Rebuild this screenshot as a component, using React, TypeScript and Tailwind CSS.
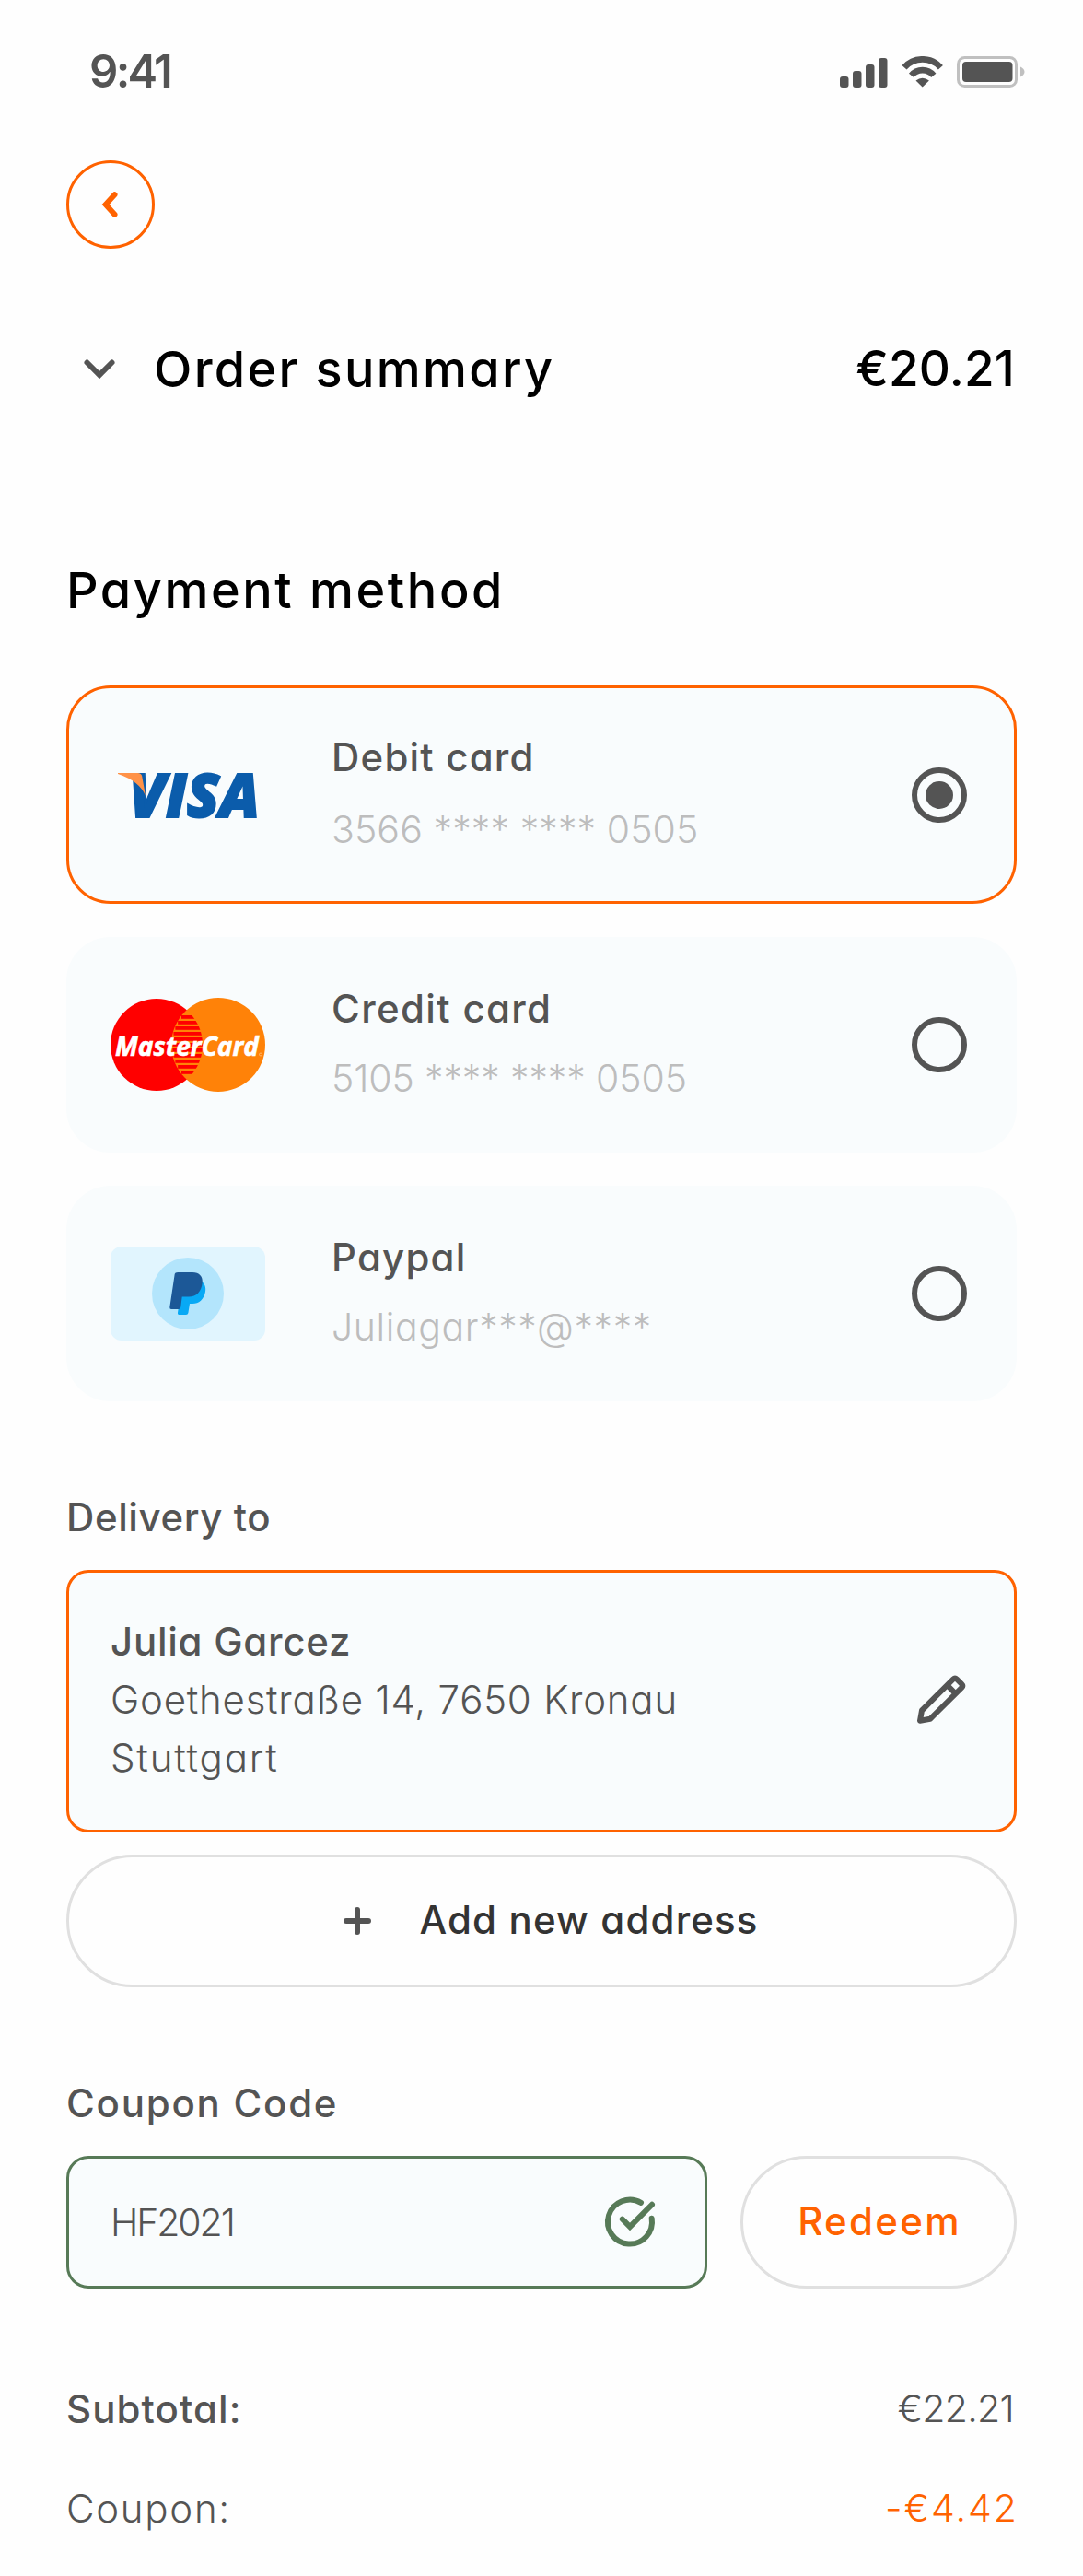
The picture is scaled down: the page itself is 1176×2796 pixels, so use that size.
import { ReactNode, useState } from "react";

interface PaymentMethod {
  id: string;
  name: string;
  detail: string;
  nameClass: string;
  detailClass: string;
  logo: ReactNode;
}

function SignalIcon() {
  return (
    <svg width="52" height="33" viewBox="0 0 52 33" fill="currentColor">
      <rect x="0" y="21" width="9.5" height="12" rx="3" />
      <rect x="14" y="15" width="9.5" height="18" rx="3" />
      <rect x="28" y="8" width="9.5" height="25" rx="3" />
      <rect x="42" y="1" width="9.5" height="32" rx="3" />
    </svg>
  );
}

function WifiIcon() {
  return (
    <svg width="46" height="34" viewBox="0 0 46 34" fill="none" stroke="currentColor" strokeWidth="6.8">
      <path d="M3 12.2a26.4 26.4 0 0 1 39.4 0" />
      <path d="M10.6 20.8a15.6 15.6 0 0 1 24.2 0" />
      <path d="M15.5 26.5q7.2-5.6 14.4 0l-7.2 7z" fill="currentColor" stroke="none" />
    </svg>
  );
}

function BatteryIcon() {
  return (
    <svg width="74" height="34" viewBox="0 0 74 34">
      <rect x="1.5" y="1.5" width="63" height="31" rx="7" fill="none" stroke="#c0c0c0" strokeWidth="3" />
      <rect x="6" y="6" width="54.5" height="22" rx="4" fill="#545454" />
      <path d="M69 11.5c2.5 1 4.5 3 4.5 5.5s-2 4.5-4.5 5.5z" fill="#c0c0c0" />
    </svg>
  );
}

function VisaLogo() {
  return (
    <svg width="168" height="102" viewBox="0 0 168 102">
      <text
        x="20"
        y="74.5"
        textLength="142"
        lengthAdjust="spacingAndGlyphs"
        strokeWidth="2"
        className="fill-[#0b5cab] stroke-[#0b5cab] font-['Open_Sans',sans-serif] text-[65px] font-extrabold italic"
      >
        VISA
      </text>
      <path d="M8 27h21.5q4 0 4.7 3.5L38 52Q32 36 8 28z" fill="#ff9248" />
    </svg>
  );
}

const stripes = [19, 25, 31, 37, 43, 49, 55, 61, 67, 73, 79];

function MasterCardLogo() {
  return (
    <svg className="overflow-visible" width="168" height="102" viewBox="0 0 168 102">
      <defs>
        <clipPath id="mc-left">
          <circle cx="50" cy="51" r="50" />
        </clipPath>
      </defs>
      <circle cx="50" cy="51" r="50" fill="#ff0000" />
      <circle cx="117" cy="51" r="51" fill="#ff8208" />
      <g clipPath="url(#mc-left)" fill="#ff0000">
        {stripes.map((y) => {
          // each stripe starts on the edge of the right circle
          const dx = Math.sqrt(50 * 50 - (y + 2 - 51) * (y + 2 - 51));
          return <rect key={y} x={117 - dx} y={y} width="60" height="3.8" />;
        })}
      </g>
      <text
        x="5"
        y="63"
        textLength="156"
        lengthAdjust="spacingAndGlyphs"
        strokeWidth="0.6"
        className="fill-white stroke-white font-['Open_Sans',sans-serif] text-[29px] font-bold italic"
      >
        MasterCard
      </text>
      <circle cx="163" cy="61.5" r="1.5" fill="none" stroke="#ffc58c" strokeWidth="0.7" />
    </svg>
  );
}

function PaypalLogo() {
  return (
    <svg width="168" height="102" viewBox="0 0 168 102">
      <rect width="168" height="102" rx="12" fill="#e1f5fe" />
      <circle cx="84" cy="51" r="39" fill="#b3e5fc" />
      <path
        d="M99 38c3.5 2.5 4.8 6.5 4 11-1.5 8.5-7 13-14 13h-3l-1.6 10q-.4 2-2.4 2h-7q-2.3 0-2-2.3L76 52z"
        fill="#08a9f5"
      />
      <path
        d="M73.2 28H89c7.5 0 11.5 4.5 10.7 11.5C98.7 48.5 93.5 54.5 85 54.5h-7.3l-1.5 11.5q-.3 1.9-2.2 1.9h-8q-1.9 0-1.7-1.9l5.4-36q.3-2 3.5-2z"
        fill="#1c5897"
      />
    </svg>
  );
}

function PencilIcon() {
  return (
    <svg width="72" height="72" viewBox="0 0 72 72" fill="none" stroke="currentColor" strokeWidth="6" strokeLinejoin="round">
      <path d="M15 58.8l2-11.3L51 13.7q2-2 4 0l5.2 5.2q2 2 0 4L26 56.8z" />
      <path d="M44.5 20.2l9 9" />
    </svg>
  );
}

function CheckIcon() {
  return (
    <svg width="72" height="72" viewBox="0 0 24 24" fill="none" stroke="#577a57" strokeWidth="2" strokeLinecap="round">
      <path d="M16 4.94A8 8 0 1 0 19.9 10.6" />
      <path d="M9.25 10.9L12 13.65L20 5.6" />
    </svg>
  );
}

function Radio({ checked }: { checked: boolean }) {
  return (
    <span className="flex size-[60px] items-center justify-center rounded-full border-6 border-[#545454]">
      {checked && <span className="size-[30px] rounded-full bg-[#545454]" />}
    </span>
  );
}

const methods: PaymentMethod[] = [
  {
    id: "debit",
    name: "Debit card",
    detail: "3566 **** **** 0505",
    nameClass: "tracking-[1.2px]",
    detailClass: "mt-4 tracking-[0.1px]",
    logo: <VisaLogo />,
  },
  {
    id: "credit",
    name: "Credit card",
    detail: "5105 **** **** 0505",
    nameClass: "tracking-[1.35px]",
    detailClass: "mt-[13px] tracking-[-0.12px]",
    logo: <MasterCardLogo />,
  },
  {
    id: "paypal",
    name: "Paypal",
    detail: "Juliagar***@****",
    nameClass: "tracking-[1.2px]",
    detailClass: "mt-[13px] tracking-[0.6px]",
    logo: <PaypalLogo />,
  },
];

function App() {
  const [selected, setSelected] = useState("debit");

  return (
    <div className="h-[2796px] w-[1176px] overflow-hidden bg-[#fefefe] font-[Inter,sans-serif] text-[42px] leading-[63px] text-[#545454] [font-feature-settings:'cv11']">
      <header className="flex h-[156px] items-center justify-between pr-[63px] pl-[97px]">
        <span className="pb-0.5 text-[49px] font-semibold tracking-[-2.7px]">9:41</span>
        <div className="flex items-center">
          <SignalIcon />
          <span className="ml-[15px]">
            <WifiIcon />
          </span>
          <span className="ml-[14px]">
            <BatteryIcon />
          </span>
        </div>
      </header>

      <main className="px-[72px] pt-[18px]">
        <button className="flex size-24 items-center justify-center rounded-full border-3 border-[#ff6200]">
          <svg width="24" height="32" viewBox="0 0 24 32" fill="none" stroke="#ff6200" strokeWidth="6" strokeLinecap="round">
            <path d="M16.5 5.2L6.7 16L16.5 26.8" />
          </svg>
        </button>

        <div className="mt-[90px] flex h-20 items-center text-[54px] font-medium text-black">
          <svg className="mr-[23px]" width="72" height="72" viewBox="0 0 72 72" fill="none" stroke="#545454" strokeWidth="6" strokeLinecap="round">
            <path d="M22.5 29.5L36 43L49.5 29.5" />
          </svg>
          <h2 className="tracking-[2.31px]">Order summary</h2>
          <span className="mr-0.5 ml-auto text-[53px] tracking-[0.16px]">€20.21</span>
        </div>

        <h2 className="mt-40 flex h-20 items-center text-[54px] font-medium tracking-[2.55px] text-black">Payment method</h2>

        <div className="mt-16 flex flex-col gap-9">
          {methods.map((m) => (
            <button
              key={m.id}
              onClick={() => setSelected(m.id)}
              className={`flex items-center rounded-[48px] border-3 bg-[#f9fcfd] pr-[51px] pl-[45px] text-left ${
                selected === m.id ? "h-[237px] border-[#ff6200]" : "h-[234px] border-[#f9fcfd]"
              }`}
            >
              {m.logo}
              <div className="ml-[72px] flex-1 pb-[3px]">
                <p className={`font-medium ${m.nameClass}`}>{m.name}</p>
                <p className={`text-[41px] font-light text-[#bdbdbd] ${m.detailClass}`}>{m.detail}</p>
              </div>
              <Radio checked={selected === m.id} />
            </button>
          ))}
        </div>

        <h3 className="mt-[94px] font-medium tracking-[0.6px]">Delivery to</h3>
        <div className="mt-[26px] flex h-[285px] items-center justify-between rounded-3xl border-3 border-[#ff6200] bg-[#f9fcfd] px-[45px]">
          <div className="pb-1">
            <p className="font-medium tracking-[0.74px]">Julia Garcez</p>
            <p className="font-light tracking-[0.76px]">Goethestraße 14, 7650 Kronau</p>
            <p className="font-light tracking-[1.8px]">Stuttgart</p>
          </div>
          <span className="pb-[3px]">
            <PencilIcon />
          </span>
        </div>

        <button className="mt-6 flex h-36 w-full items-center justify-center gap-[31px] rounded-full border-3 border-[#e0e0e0] font-medium">
          <svg width="72" height="72" viewBox="0 0 72 72" stroke="currentColor" strokeWidth="6" strokeLinecap="round">
            <path d="M36 24v24M24 36h24" />
          </svg>
          <span className="pb-1 tracking-[1.14px] text-[#333333]">Add new address</span>
        </button>

        <h3 className="mt-[94px] font-medium tracking-[1.75px]">Coupon Code</h3>
        <div className="mt-[26px] flex gap-9">
          <div className="flex h-36 w-[696px] items-center justify-between rounded-3xl border-3 border-[#577a57] bg-[#f9fcfd] px-[45px]">
            <span className="text-[41px] font-light tracking-[-2.1px]">HF2021</span>
            <CheckIcon />
          </div>
          <button className="h-36 flex-1 rounded-full border-3 border-[#e0e0e0] pb-1 pl-0.5 font-medium tracking-[2.3px] text-[#ff6200]">
            Redeem
          </button>
        </div>

        <div className="mt-[99px] flex justify-between">
          <span className="font-medium tracking-[1.08px]">Subtotal:</span>
          <span className="mr-[3px] text-[41px] font-light tracking-[-0.7px]">€22.21</span>
        </div>
        <div className="mt-[45px] flex justify-between">
          <span className="font-light tracking-[1.7px]">Coupon:</span>
          <span className="-mr-0.5 text-[41px] font-light tracking-[2px] text-[#ff6200]">-€4.42</span>
        </div>
      </main>
    </div>
  );
}

export default App;
